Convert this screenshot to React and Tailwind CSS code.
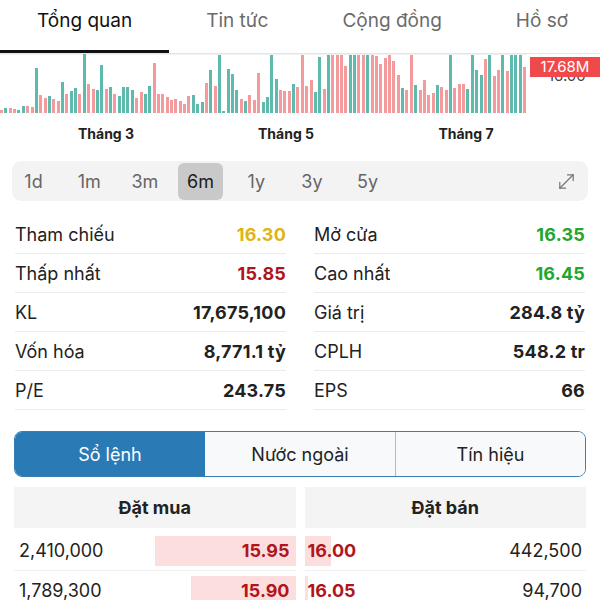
import { MoveDiagonal } from "lucide-react";

const FONT = { fontFamily: "Inter, 'Noto Sans', sans-serif" };

// t = tăng (xanh), r = giảm (đỏ)
const BARS = (
  "r3 t5 r5 r4 t3 t7 r7 r6 t45 r18 r15 t17 r14 r12 t31 r19 t22 t25 r19 t60 r29 r24 t23 t48 r24 t26 r19 t17 t26 t26 t23 r15 r21 t19 t27 r50 r19 r19 r16 r13 r14 " +
  "r12 r9 r17 t18 t9 t11 r30 t43 r27 t58 t2 t44 t39 t23 r14 t12 r18 r13 r40 t11 t16 t58 t34 r23 r22 r22 t29 r26 r58 r27 r33 t21 t56 r24 t58 r58 r58 r58 r47 t58 t58 " +
  "r58 r58 t58 r58 r57 r49 r55 r58 r52 r38 t25 r23 r58 t28 r23 r33 r18 r20 t28 r26 r23 t58 r25 r29 r29 t24 t58 t43 t38 r54 t58 r37 r43 t58 r42 t58 t58 t58 r46"
)
  .split(" ")
  .map((s) => ({ up: s[0] === "t", h: Number(s.slice(1)) }));

const tabs = ["Tổng quan", "Tin tức", "Cộng đồng", "Hồ sơ"];
const periods = ["1d", "1m", "3m", "6m", "1y", "3y", "5y"];

const stats = [
  ["Tham chiếu", "16.30", "text-[#e0b414]", "Mở cửa", "16.35", "text-[#22a62c]"],
  ["Thấp nhất", "15.85", "text-[#b1151b]", "Cao nhất", "16.45", "text-[#22a62c]"],
  ["KL", "17,675,100", "text-[#222]", "Giá trị", "284.8 tỷ", "text-[#222]"],
  ["Vốn hóa", "8,771.1 tỷ", "text-[#222]", "CPLH", "548.2 tr", "text-[#222]"],
  ["P/E", "243.75", "text-[#222]", "EPS", "66", "text-[#222]"],
];

const mua = [
  { kl: "2,410,000", gia: "15.95", w: 141 },
  { kl: "1,789,300", gia: "15.90", w: 105 },
];
const ban = [
  { kl: "442,500", gia: "16.00", w: 26 },
  { kl: "94,700", gia: "16.05", w: 3 },
];

function StatCell({ label, value, color }) {
  return (
    <div className="h-[39px] flex items-center justify-between border-b border-[#ececec]">
      <span className="text-[18px] text-[#222]">{label}</span>
      <span className={"text-[18px] font-bold tracking-[0.2px] " + color}>{value}</span>
    </div>
  );
}

export default function App() {
  return (
    <div className="w-[600px] h-[600px] overflow-hidden bg-white" style={FONT}>
      {/* ===== TABS ===== */}
      <div className="flex h-[54px] border-b border-[#e6e6e6] overflow-hidden">
        {tabs.map((t, i) => (
          <div
            key={t}
            className={
              "shrink-0 whitespace-nowrap px-[37px] pt-[7px] text-[19px] leading-[28px] " +
              (i === 0 ? "text-[#111] border-b-[3px] border-[#111]" : "text-[#6b6b6b]")
            }
          >
            {t}
          </div>
        ))}
      </div>

      {/* ===== CHART ===== */}
      <div className="relative h-[59px]">
        <div className="w-[527px] h-full flex items-end justify-between border-t border-[#f0f0f0]">
          {BARS.map((b, i) => (
            <div
              key={i}
              className={"w-[3px] " + (b.up ? "bg-[#5fbaae]" : "bg-[#f39b9c]")}
              style={{ height: Math.min(b.h, 59) }}
            />
          ))}
        </div>
        <div className="absolute left-[548px] top-[13px] text-[15px] leading-[18px] text-[#444]">16.00</div>
        <div className="absolute left-[530px] top-[3px] w-[70px] h-[20px] bg-[#f0494b] text-white text-[15px] leading-[20px] text-center">
          17.68M
        </div>
      </div>

      <div className="flex h-[38px] items-center pl-[16px] pt-[2px]">
        {["Tháng 3", "Tháng 5", "Tháng 7"].map((m) => (
          <div key={m} className="w-[180px] text-center text-[14px] font-bold text-[#222]">
            {m}
          </div>
        ))}
      </div>

      {/* ===== PERIOD ===== */}
      <div className="mx-[12px] mt-[10px] h-[40px] rounded-[9px] bg-[#f3f3f3] flex items-center">
        <div className="flex -ml-px gap-[10.7px]">
          {periods.map((p) => (
            <div
              key={p}
              className={
                "w-[45px] h-[37px] rounded-[6px] flex items-center justify-center text-[18px] " +
                (p === "6m" ? "bg-[#c9c9c9] text-[#1a1a1a]" : "text-[#666]")
              }
            >
              {p}
            </div>
          ))}
        </div>
        <div className="ml-auto mr-[10px] text-[#777]">
          <MoveDiagonal size={23} strokeWidth={1.3} />
        </div>
      </div>

      {/* ===== STATS ===== */}
      <div className="mt-[14px] px-[15px] grid grid-cols-2 gap-x-[28px]">
        {stats.map((r) => [
          <StatCell key={r[0]} label={r[0]} value={r[1]} color={r[2]} />,
          <StatCell key={r[3]} label={r[3]} value={r[4]} color={r[5]} />,
        ])}
      </div>

      {/* ===== SEGMENT ===== */}
      <div className="mx-[14px] mt-[21px] h-[46px] rounded-[8px] border border-[#3a7fb3] overflow-hidden grid grid-cols-3 text-[18px]">
        <div className="bg-[#2a7ab6] text-white flex items-center justify-center">Sổ lệnh</div>
        <div className="bg-[#f8f9fa] text-[#222] flex items-center justify-center">Nước ngoài</div>
        <div className="bg-[#f8f9fa] text-[#222] flex items-center justify-center border-l border-[#a9bccb]">
          Tín hiệu
        </div>
      </div>

      {/* ===== ORDER BOOK ===== */}
      <div className="mt-[10px] px-[14px] grid grid-cols-2 gap-x-[9px]">
        <div>
          <div className="h-[41px] bg-[#f4f4f4] flex items-center justify-center text-[18px] font-bold text-[#222]">
            Đặt mua
          </div>
          <div className="mt-[3px]">
            {mua.map((r) => (
              <div key={r.kl} className="relative h-[40px] flex items-center justify-between border-b border-[#f0f0f0] pl-[5px] pr-[6px]">
                <div className="absolute right-0 top-[5px] h-[30px] bg-[#fcdedf]" style={{ width: r.w }} />
                <span className="relative text-[18px] text-[#222]">{r.kl}</span>
                <span className="relative text-[18px] font-bold text-[#b1151b]">{r.gia}</span>
              </div>
            ))}
          </div>
        </div>
        <div>
          <div className="h-[41px] bg-[#f4f4f4] flex items-center justify-center text-[18px] font-bold text-[#222]">
            Đặt bán
          </div>
          <div className="mt-[3px]">
            {ban.map((r) => (
              <div key={r.kl} className="relative h-[40px] flex items-center justify-between border-b border-[#f0f0f0] pl-[3px] pr-[4px]">
                <div className="absolute left-0 top-[5px] h-[30px] bg-[#fcdedf]" style={{ width: r.w }} />
                <span className="relative text-[18px] font-bold text-[#b1151b]">{r.gia}</span>
                <span className="relative text-[18px] text-[#222]">{r.kl}</span>
              </div>
            ))}
          </div>
        </div>
      </div>
    </div>
  );
}
